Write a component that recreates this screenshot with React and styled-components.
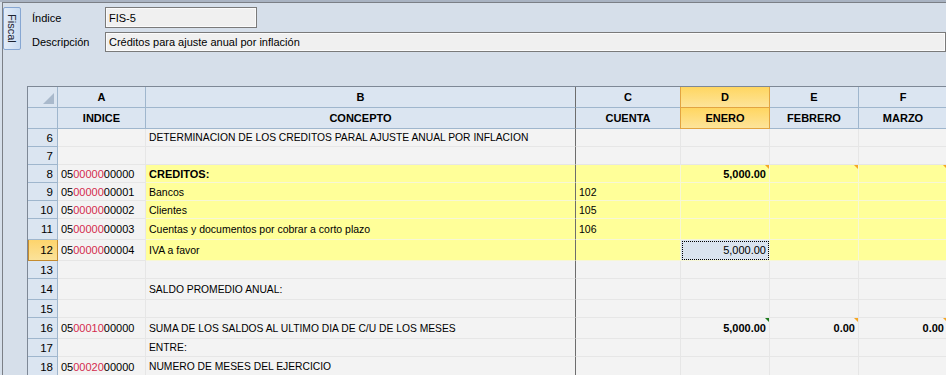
import React from "react";
import styled, { createGlobalStyle, css } from "styled-components";

const GlobalStyle = createGlobalStyle`
  html, body {
    margin: 0;
    padding: 0;
    background: #d6dfea;
    overflow: hidden;
  }
  body {
    font-family: "Liberation Sans", Arial, sans-serif;
    font-size: 11px;
    color: #000;
  }
`;

const COLS = "30px 88px 430px 105px 89px 89px 89px";

const Screen = styled.div`
  width: 946px;
  height: 375px;
  overflow: hidden;
  border-top: 2px solid #a9b3c2;
  box-sizing: border-box;
  padding-left: 2px;
`;

const Panel = styled.div`
  height: 100%;
  border-top: 1px solid #7b7f86;
  border-left: 1px solid #7b7f86;
  background: #d6dfea;
`;

const TopArea = styled.div`
  display: flex;
  align-items: flex-start;
  padding-top: 4px;
`;

const FiscalTab = styled.div`
  width: 16px;
  height: 41px;
  border: 1px solid #86a6d2;
  border-radius: 2px;
  background: linear-gradient(to right, #e3ecf8, #c9dbf1);
  display: flex;
  align-items: center;
  justify-content: center;
  flex-shrink: 0;
`;

const TabText = styled.span`
  writing-mode: vertical-rl;
  font-size: 11px;
  line-height: 16px;
  color: #1b2230;
`;

const Fields = styled.div`
  margin-left: 11px;
  display: flex;
  flex-direction: column;
  gap: 4px;
  flex: 1;
`;

const FieldRow = styled.div`
  display: grid;
  grid-template-columns: 73px ${(p) => p.$width || "1fr"};
  align-items: center;
`;

const Label = styled.span`
  font-size: 11px;
  color: #000;
`;

const Input = styled.div`
  height: ${(p) => p.$h}px;
  box-sizing: border-box;
  border: 1px solid #7a7a7a;
  box-shadow: inset 0 0 0 1px #fbfbfb;
  background: #f0f0f0;
  padding-left: 3px;
  display: flex;
  align-items: center;
  font-size: 11px;
  white-space: nowrap;
  overflow: hidden;
`;

const Sheet = styled.div`
  margin-top: 34px;
  margin-left: 24px;
  border-top: 1px solid #7e8896;
  border-left: 1px solid #7e8896;
  width: 1000px;
`;

const Row = styled.div`
  display: grid;
  grid-template-columns: ${COLS};
  height: ${(p) => p.$h}px;
`;

const HeadCell = styled.div`
  box-sizing: border-box;
  border-right: 1px solid ${(p) => (p.$dark ? "#6d6d6d" : "#9fb6cd")};
  border-bottom: 1px solid #9fb6cd;
  background: #dbe5f1;
  display: flex;
  align-items: center;
  justify-content: center;
  font-weight: bold;
  font-size: 11px;
  position: relative;
  ${(p) =>
    p.$active &&
    css`
      background: linear-gradient(#ffd661, #fde49a);
      border: 1px solid #e2a441;
      border-top: none;
      margin-left: -1px;
    `}
`;

const CornerCell = styled(HeadCell)`
  &::after {
    content: "";
    position: absolute;
    right: 3px;
    bottom: 3px;
    border-style: solid;
    border-width: 0 0 11px 11px;
    border-color: transparent transparent #a9b9cc transparent;
  }
`;

const RowNum = styled.div`
  box-sizing: border-box;
  border-right: 1px solid #9fb6cd;
  border-bottom: 1px solid #9fb6cd;
  background: #dbe5f1;
  display: flex;
  align-items: center;
  justify-content: flex-end;
  padding-right: 4px;
  font-size: 11.5px;
  ${(p) =>
    p.$active &&
    css`
      background: linear-gradient(#fdd46c, #fbe29a);
      border: 1px solid #c48b2f;
      border-top: none;
    `}
`;

const bgs = {
  grey: { bg: "#f3f3f3", line: "#e6e6e6" },
  yellow: { bg: "#ffff99", line: "#f7f7d6" },
};

const Cell = styled.div`
  box-sizing: border-box;
  position: relative;
  background: ${(p) => bgs[p.$tone || "grey"].bg};
  border-right: 1px solid
    ${(p) => (p.$dark ? "#6d6d6d" : bgs[p.$tone || "grey"].line)};
  border-bottom: 1px solid ${(p) => bgs[p.$tone || "grey"].line};
  display: flex;
  align-items: center;
  justify-content: ${(p) => (p.$right ? "flex-end" : "flex-start")};
  padding: 0 3px;
  font-size: ${(p) => (p.$caps ? "10.3px" : p.$small ? "10.5px" : "11px")};
  font-weight: ${(p) => (p.$bold ? "bold" : "normal")};
  white-space: nowrap;
  ${(p) =>
    p.$selected &&
    css`
      background: #dae3ef;
      outline: 1px dotted #000;
      outline-offset: -2px;
    `}
`;

const Marker = styled.span`
  position: absolute;
  top: 0;
  right: 0;
  border-style: solid;
  border-width: 0 4px 4px 0;
  border-color: transparent ${(p) => (p.$green ? "#1d7a1d" : "#f5a623")}
    transparent transparent;
`;

const Red = styled.span`
  color: #d42b4e;
`;

const Index = ({ mid, tail }) => (
  <>
    05<Red>{mid}</Red>
    {tail}
  </>
);

const rows = [
  { n: 6, h: 18, b: "DETERMINACION DE LOS CREDITOS PARAL AJUSTE ANUAL POR INFLACION", caps: true },
  { n: 7, h: 18 },
  { n: 8, h: 18, idx: ["00000", "00000"], b: "CREDITOS:", bBold: true, yellow: true, d: "5,000.00", dBold: true, marks: ["o", "o", "o"] },
  { n: 9, h: 18, idx: ["00000", "00001"], b: "Bancos", small: true, c: "102", yellow: true },
  { n: 10, h: 18, idx: ["00000", "00002"], b: "Clientes", small: true, c: "105", yellow: true },
  { n: 11, h: 21, idx: ["00000", "00003"], b: "Cuentas y documentos por cobrar a corto plazo", small: true, c: "106", yellow: true },
  { n: 12, h: 21, idx: ["00000", "00004"], b: "IVA a favor", small: true, yellow: true, d: "5,000.00", sel: true, active: true },
  { n: 13, h: 18 },
  { n: 14, h: 21, b: "SALDO PROMEDIO ANUAL:", caps: true },
  { n: 15, h: 18 },
  { n: 16, h: 21, idx: ["00010", "00000"], b: "SUMA DE LOS SALDOS AL ULTIMO DIA DE C/U DE LOS MESES", caps: true, d: "5,000.00", e: "0.00", f: "0.00", dBold: true, marks: ["g", "o", "o"] },
  { n: 17, h: 18, b: "ENTRE:", caps: true },
  { n: 18, h: 20, idx: ["00020", "00000"], b: "NUMERO DE MESES DEL EJERCICIO", caps: true },
];

export default function App() {
  return (
    <>
      <GlobalStyle />
      <Screen>
        <Panel>
          <TopArea>
            <FiscalTab>
              <TabText>Fiscal</TabText>
            </FiscalTab>
            <Fields>
              <FieldRow $width="152px">
                <Label>Índice</Label>
                <Input $h={21}>FIS-5</Input>
              </FieldRow>
              <FieldRow>
                <Label>Descripción</Label>
                <Input $h={20}>Créditos para ajuste anual por inflación</Input>
              </FieldRow>
            </Fields>
          </TopArea>

          <Sheet>
            <Row $h={21}>
              <CornerCell />
              <HeadCell>A</HeadCell>
              <HeadCell $dark>B</HeadCell>
              <HeadCell>C</HeadCell>
              <HeadCell $active>D</HeadCell>
              <HeadCell>E</HeadCell>
              <HeadCell>F</HeadCell>
            </Row>
            <Row $h={21}>
              <HeadCell />
              <HeadCell>INDICE</HeadCell>
              <HeadCell $dark>CONCEPTO</HeadCell>
              <HeadCell>CUENTA</HeadCell>
              <HeadCell $active>ENERO</HeadCell>
              <HeadCell>FEBRERO</HeadCell>
              <HeadCell>MARZO</HeadCell>
            </Row>
            {rows.map((r) => {
              const tone = r.yellow ? "yellow" : "grey";
              const marks = r.marks || [];
              return (
                <Row key={r.n} $h={r.h}>
                  <RowNum $active={r.active}>{r.n}</RowNum>
                  <Cell>{r.idx && <Index mid={r.idx[0]} tail={r.idx[1]} />}</Cell>
                  <Cell $tone={tone} $dark $bold={r.bBold} $small={r.small} $caps={r.caps}>
                    {r.b}
                  </Cell>
                  <Cell $tone={tone} $small>
                    {r.c}
                  </Cell>
                  <Cell $tone={tone} $right $bold={r.dBold} $selected={r.sel}>
                    {r.d}
                    {marks[0] && <Marker $green={marks[0] === "g"} />}
                  </Cell>
                  <Cell $tone={tone} $right $bold>
                    {r.e}
                    {marks[1] && <Marker $green={marks[1] === "g"} />}
                  </Cell>
                  <Cell $tone={tone} $right $bold>
                    {r.f}
                    {marks[2] && <Marker $green={marks[2] === "g"} />}
                  </Cell>
                </Row>
              );
            })}
          </Sheet>
        </Panel>
      </Screen>
    </>
  );
}
